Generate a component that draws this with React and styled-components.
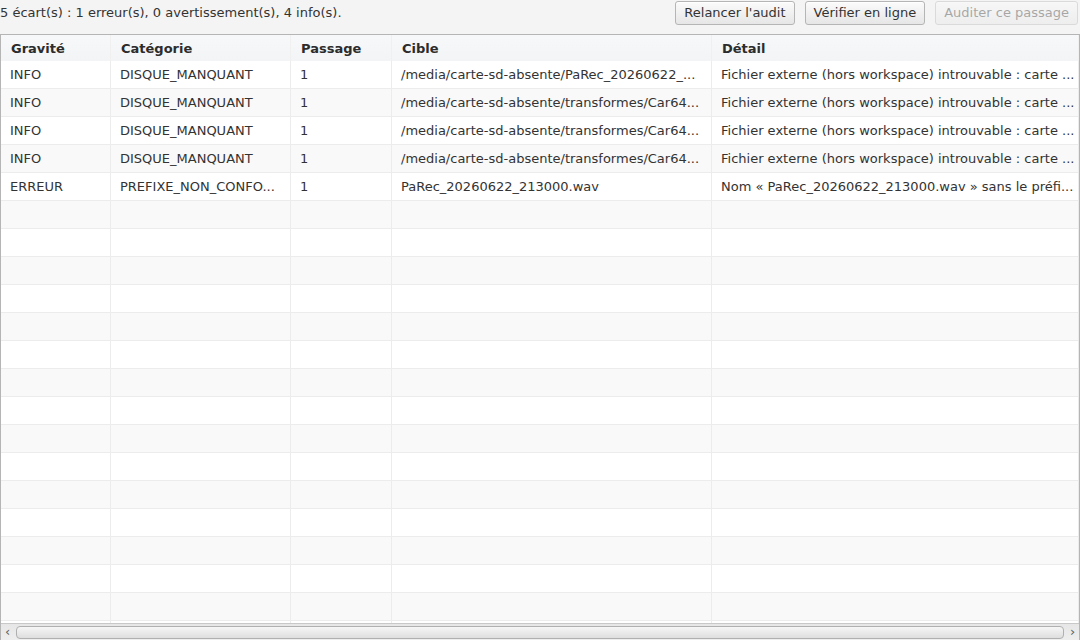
import React from 'react';
import styled, { createGlobalStyle } from 'styled-components';

const GlobalStyle = createGlobalStyle`
  html, body {
    margin: 0;
    padding: 0;
    background: #f4f4f4;
    font-family: "DejaVu Sans", "Liberation Sans", sans-serif;
    font-size: 13px;
    color: #333;
  }
  #root {
    height: 640px;
  }
`;

const COLUMNS = [
  { key: 'gravite', label: 'Gravité', width: 110 },
  { key: 'categorie', label: 'Catégorie', width: 180 },
  { key: 'passage', label: 'Passage', width: 101 },
  { key: 'cible', label: 'Cible', width: 320 },
  { key: 'detail', label: 'Détail', width: null },
];

const ROWS = [
  ['INFO', 'DISQUE_MANQUANT', '1', '/media/carte-sd-absente/PaRec_20260622_...', 'Fichier externe (hors workspace) introuvable : carte ...'],
  ['INFO', 'DISQUE_MANQUANT', '1', '/media/carte-sd-absente/transformes/Car64...', 'Fichier externe (hors workspace) introuvable : carte ...'],
  ['INFO', 'DISQUE_MANQUANT', '1', '/media/carte-sd-absente/transformes/Car64...', 'Fichier externe (hors workspace) introuvable : carte ...'],
  ['INFO', 'DISQUE_MANQUANT', '1', '/media/carte-sd-absente/transformes/Car64...', 'Fichier externe (hors workspace) introuvable : carte ...'],
  ['ERREUR', 'PREFIXE_NON_CONFO...', '1', 'PaRec_20260622_213000.wav', 'Nom « PaRec_20260622_213000.wav » sans le préfi...'],
];

const EMPTY_ROWS = 16;

const gridCols = COLUMNS.map((c) => (c.width ? `${c.width}px` : '1fr')).join(' ');

const Page = styled.div`
  height: 640px;
  display: flex;
  flex-direction: column;
`;

const Toolbar = styled.div`
  height: 26px;
  display: flex;
  align-items: center;
  gap: 10px;
  padding-right: 2px;
  margin-bottom: 8px;
`;

const Status = styled.span`
  flex: 1;
  margin-top: -2px;
  white-space: nowrap;
`;

const Button = styled.button`
  height: 24px;
  margin-top: -1px;
  padding: 0 8px;
  font-family: inherit;
  font-size: 13px;
  color: #333;
  border: 1px solid #b5b5b5;
  border-radius: 3px;
  background: linear-gradient(#fbfbfb, #e6e6e6);
  box-shadow: inset 0 1px 0 #fff;
  opacity: ${(p) => (p.disabled ? 0.4 : 1)};
`;

const Table = styled.div`
  flex: 1;
  min-height: 0;
  display: flex;
  flex-direction: column;
  border: 1px solid #b5b5b5;
  border-bottom: none;
  background: #fff;
  overflow: hidden;
`;

const HeaderRow = styled.div`
  display: grid;
  grid-template-columns: ${gridCols};
  height: 26px;
  background: linear-gradient(#f7f8f9, #f3f4f6);
  flex-shrink: 0;
`;

const HeaderCell = styled.div`
  display: flex;
  align-items: center;
  padding-left: 10px;
  font-weight: bold;
  color: #2c2c2c;
  border-right: 1px solid #f0f0f0;
`;

const Body = styled.div`
  flex: 1;
  min-height: 0;
  overflow: hidden;
`;

const Row = styled.div`
  display: grid;
  grid-template-columns: ${gridCols};
  height: 28px;
  box-sizing: border-box;
  border-bottom: 1px solid #ececec;
  background: ${(p) => (p.$odd ? '#f9f9f9' : '#fff')};
`;

const Cell = styled.div`
  display: flex;
  align-items: center;
  padding-left: 9px;
  padding-bottom: 1px;
  border-right: 1px solid #ececec;
  white-space: nowrap;
  overflow: hidden;
  color: #333;
`;

const ScrollBar = styled.div`
  height: 16px;
  display: flex;
  align-items: center;
  background: linear-gradient(#e6e6e6, #eeeeee);
  border-top: 1px solid #c8c8c8;
  flex-shrink: 0;
`;

const Arrow = styled.span`
  flex: 0 0 13px;
  height: 16px;
  display: flex;
  align-items: center;
  justify-content: center;
  font-family: "DejaVu Sans", sans-serif;
  font-size: 13px;
  line-height: 16px;
  color: #5c5c5c;
`;

const Thumb = styled.div`
  flex: 1;
  height: 11px;
  margin: 0 2px;
  border: 1px solid #b0b0b0;
  border-radius: 4px;
  background: linear-gradient(#f6f6f6, #dedede);
`;

const App = () => {
  return (
    <Page>
      <GlobalStyle />
      <Toolbar>
        <Status>5 écart(s) : 1 erreur(s), 0 avertissement(s), 4 info(s).</Status>
        <Button>Relancer l'audit</Button>
        <Button>Vérifier en ligne</Button>
        <Button disabled>Auditer ce passage</Button>
      </Toolbar>
      <Table>
        <HeaderRow>
          {COLUMNS.map((c) => (
            <HeaderCell key={c.key}>{c.label}</HeaderCell>
          ))}
        </HeaderRow>
        <Body>
          {ROWS.map((r, i) => (
            <Row key={i} $odd={i % 2 === 1}>
              {r.map((v, j) => (
                <Cell key={j}>{v}</Cell>
              ))}
            </Row>
          ))}
          {Array.from({ length: EMPTY_ROWS }).map((_, i) => (
            <Row key={`e${i}`} $odd={(i + ROWS.length) % 2 === 1}>
              {COLUMNS.map((c) => (
                <Cell key={c.key} />
              ))}
            </Row>
          ))}
        </Body>
        <ScrollBar>
          <Arrow>‹</Arrow>
          <Thumb />
          <Arrow>›</Arrow>
        </ScrollBar>
      </Table>
    </Page>
  );
};

export default App;
